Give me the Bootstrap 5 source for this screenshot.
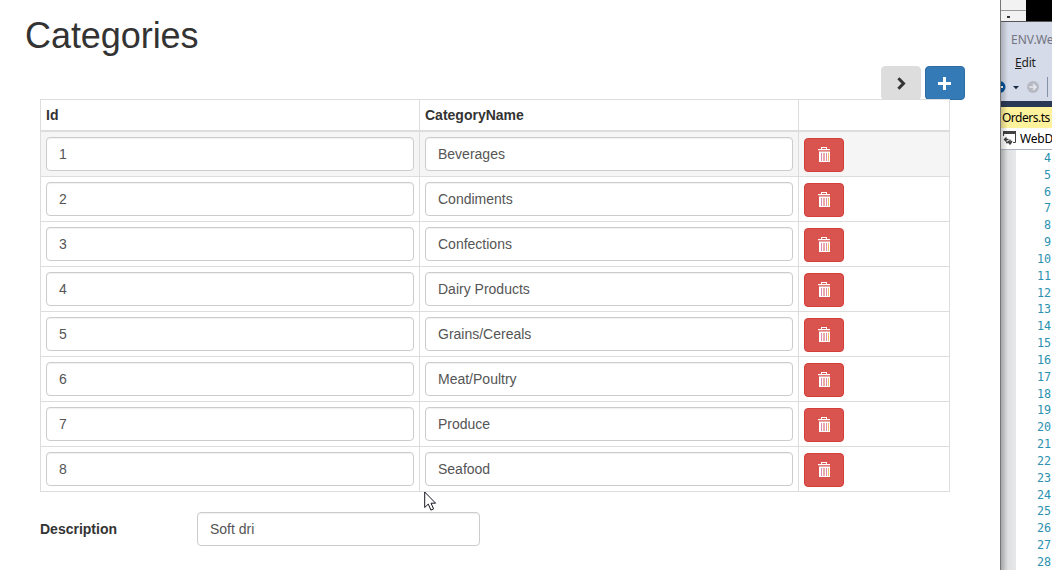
<!DOCTYPE html>
<html lang="en">
<head>
<meta charset="utf-8">
<title>Categories</title>
<link href="https://cdn.jsdelivr.net/npm/bootstrap@5.3.0/dist/css/bootstrap.min.css" rel="stylesheet">
<script src="https://cdn.jsdelivr.net/npm/bootstrap@5.3.0/dist/js/bootstrap.bundle.min.js"></script>
<style>
body{font:14px/20px "Liberation Sans",Arial,sans-serif;color:#333;background:#fff;width:1052px;height:570px}
.page{width:1000px;padding:16px 0 0 25px}
.page h1{font-size:36px;line-height:40px;font-weight:400;margin:0 0 10px;color:#333;letter-spacing:-.06px}
.main-block{margin-left:15px;width:925px}
.form-control{height:34px;padding:6px 12px;font-size:14px;line-height:20px;border:1px solid #ccc;border-radius:4px;color:#555;background:#fff;box-shadow:inset 0 1px 1px rgba(0,0,0,.06)}
.btn{width:40px;height:34px;padding:0;border-radius:4px;display:flex;align-items:center;justify-content:center}
.btn-next{background:#ddd;border-color:#ddd;color:#333}
.btn-add{background:#337ab7;border-color:#2e6da4;color:#fff}
.btn-del{background:#d9534f;border-color:#d43f3a;color:#fff;position:relative;top:1px}
.toolbar{height:33px}
.grid-table{width:910px;table-layout:fixed;border-collapse:separate;border-spacing:0;border:solid #ddd;border-width:1px 0 0 1px;position:relative;margin:0}
.grid-table th,.grid-table td{padding:5px;border:solid #ddd;border-width:0 1px 1px 0;text-align:left;vertical-align:top}
.grid-table th{height:32px;border-bottom-width:2px}
.grid-table tr.current td{background:#f5f5f5}
.desc{margin-top:20px}
.desc label{width:157px;font-weight:700}
.desc .form-control{width:283px}
.ide{width:52px;font:12px/16px "Noto Sans",sans-serif;color:#1e1e1e;white-space:nowrap;border-left:1px solid #777;background:#d6dbe9}
.ide-top{height:22px;background:#f2f2f2;border-bottom:1px solid #555}
.ide-top .strip{height:11px;border-bottom:1px solid #999;width:25px}
.ide-top .dark{width:26px;height:21px;background:#000}
.ide-title{height:31px;padding:10px 0 0 10px;color:#717480}
.ide-menu{height:22px;padding:2px 0 0 14px;letter-spacing:-.2px}
.ide-tools{height:26px}
.ide-tab{height:21px;background:#fff29d;color:#000;padding:2px 0 0 1px;line-height:17px;letter-spacing:-.5px}
.ide-path{height:22px;background:#fff;color:#000;border-bottom:1px solid #aeb4c4;padding:3px 0 0 2px;letter-spacing:-.2px}
.code-area{background:#fff;height:420px}
.gutter{width:15px;background:linear-gradient(90deg,#cfd0d2,#dcdee0 5px,#e7e8ea)}
.numbers{font:11.7px/16.83px "DejaVu Sans Mono",monospace;color:#2b91af;text-align:right;padding-right:1px}
.shade{left:1001px;top:22px;width:7px;height:548px;background:linear-gradient(90deg,rgba(0,0,0,.2),transparent);pointer-events:none}
.pointer{left:424px;top:491px}
</style>
</head>
<body class="d-flex overflow-hidden position-relative">
<main class="page flex-shrink-0">
  <h1>Categories</h1>
  <div class="main-block">
    <div class="toolbar d-flex justify-content-end gap-1">
      <button class="btn btn-next" aria-label="Next"><svg width="14" height="14" viewBox="0 0 14 14"><path d="M4.400 2.300 9.500 7.500l-5.100 5.200" fill="none" stroke="currentColor" stroke-width="3"/></svg></button>
      <button class="btn btn-add" aria-label="Add"><svg width="14" height="14" viewBox="0 0 14 14"><path d="M5 1h3v5h5v3H8v5H5V9H0V6h5z" fill="currentColor"/></svg></button>
    </div>
    <table class="grid-table">
      <colgroup><col style="width:379px"><col style="width:379px"><col style="width:151px"></colgroup>
      <thead><tr><th>Id</th><th>CategoryName</th><th></th></tr></thead>
      <tbody id="rows"></tbody>
    </table>
    <div class="desc d-flex align-items-center">
      <label for="description">Description</label>
      <input id="description" class="form-control" value="Soft dri">
    </div>
  </div>
</main>
<aside class="ide flex-shrink-0 overflow-hidden">
  <div class="ide-top d-flex"><div class="flex-shrink-0"><div class="strip"></div><svg class="d-block" width="25" height="10"><path d="M6 5h3v2H6z" fill="#333"/></svg></div><div class="dark flex-shrink-0"></div></div>
  <div class="ide-title">ENV.We</div>
  <div class="ide-menu"><u>E</u>dit</div>
  <div class="ide-tools"><svg class="d-block" width="52" height="26"><circle cx="-1.500" cy="12" r="6" fill="#00539c"/><path d="M-3 12h5" stroke="#fff" stroke-width="2"/><path d="M12 11h6l-3 3.200z" fill="#1b293e"/><circle cx="32" cy="12" r="6" fill="#b7b9c2"/><path d="M28.500 12h6m-2.500-3 3 3-3 3" fill="none" stroke="#e8eaf1" stroke-width="1.500"/><path d="M46.500 2v20" stroke="#8591a9"/></svg></div>
  <div style="height:6px;background:#293955"></div>
  <div class="ide-tab">Orders.ts</div>
  <div class="ide-path d-flex"><svg class="flex-shrink-0" width="14" height="16" viewBox="0 0 14 16"><path d="M.500 5V2h12v9.500H10" fill="none" stroke="#424242"/><path d="M0 0h13v3H0z" fill="#424242"/><path d="M1 8.500h4.500M3.500 6.500l-2 2 2 2M3 11.500h6M7 8.500v5M5 10l2 3 2-3" fill="none" stroke="#424242" stroke-width="1.400"/></svg><span style="margin-left:3px">WebD</span></div>
  <div class="code-area d-flex"><div class="gutter"></div><div class="numbers flex-grow-1" id="numbers"></div></div>
</aside>
<div class="shade position-absolute"></div>
<svg class="pointer position-absolute" width="14" height="21" viewBox="0 0 14 21"><path d="M.7 1v15.500l3.600-3.400 2.600 6 2.700-1.200-2.600-5.700h4.600z" fill="#fff" stroke="#15151f"/></svg>
<script>
const trash='<svg width="14" height="16" viewBox="0 0 14 16"><path fill="currentColor" d="M1 2h3V0h6v2h3v1.300H1zM5 1v1h4V1z" fill-rule="evenodd"/><path fill="currentColor" d="M2 4.500h11V15H2z"/><path d="M4.500 6v8M9.500 6v8" stroke="#d98cad"/><path d="M7 6v8" stroke="#d9534f"/><path d="M11.500 6v8" stroke="#f3bd65"/></svg>';
const names=['Beverages','Condiments','Confections','Dairy Products','Grains/Cereals','Meat/Poultry','Produce','Seafood'];
document.getElementById('rows').innerHTML=names.map((n,i)=>`<tr class="${i?'':'current'}"><td><input class="form-control" aria-label="Id" value="${i+1}"></td><td><input class="form-control" aria-label="Category name" value="${n}"></td><td><button class="btn btn-del" aria-label="Delete">${trash}</button></td></tr>`).join('');
document.getElementById('numbers').innerHTML=Array.from({length:25},(_,i)=>`<div>${i+4}</div>`).join('');
</script>
</body>
</html>
